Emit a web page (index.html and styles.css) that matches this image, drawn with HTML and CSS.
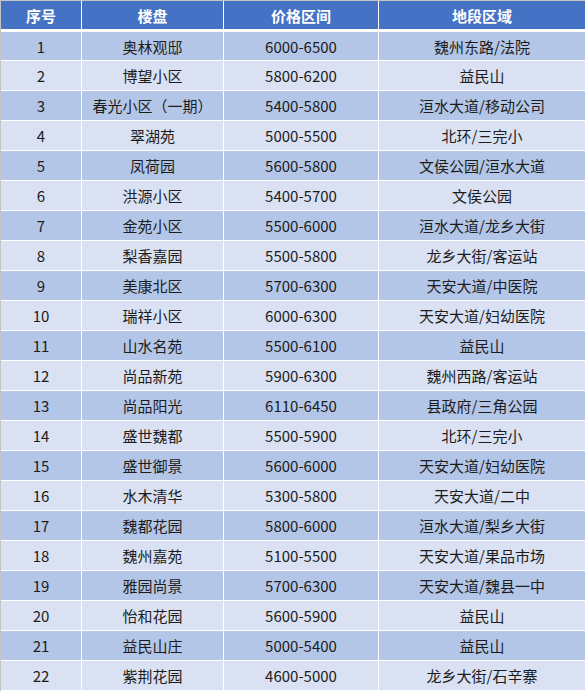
FILE: index.html
```html
<!DOCTYPE html>
<html lang="zh-CN">
<head>
<meta charset="utf-8">
<title>楼盘价格</title>
<link rel="stylesheet" href="styles.css">
</head>
<body>
<div class="sheet">
  <div class="row head"><div>序号</div><div>楼盘</div><div>价格区间</div><div>地段区域</div></div>
  <div class="row odd first"><div>1</div><div>奥林观邸</div><div>6000-6500</div><div>魏州东路/法院</div></div>
  <div class="row even"><div>2</div><div>博望小区</div><div>5800-6200</div><div>益民山</div></div>
  <div class="row odd"><div>3</div><div>春光小区（一期）</div><div>5400-5800</div><div>洹水大道/移动公司</div></div>
  <div class="row even"><div>4</div><div>翠湖苑</div><div>5000-5500</div><div>北环/三完小</div></div>
  <div class="row odd"><div>5</div><div>凤荷园</div><div>5600-5800</div><div>文侯公园/洹水大道</div></div>
  <div class="row even"><div>6</div><div>洪源小区</div><div>5400-5700</div><div>文侯公园</div></div>
  <div class="row odd"><div>7</div><div>金苑小区</div><div>5500-6000</div><div>洹水大道/龙乡大街</div></div>
  <div class="row even"><div>8</div><div>梨香嘉园</div><div>5500-5800</div><div>龙乡大街/客运站</div></div>
  <div class="row odd"><div>9</div><div>美康北区</div><div>5700-6300</div><div>天安大道/中医院</div></div>
  <div class="row even"><div>10</div><div>瑞祥小区</div><div>6000-6300</div><div>天安大道/妇幼医院</div></div>
  <div class="row odd"><div>11</div><div>山水名苑</div><div>5500-6100</div><div>益民山</div></div>
  <div class="row even"><div>12</div><div>尚品新苑</div><div>5900-6300</div><div>魏州西路/客运站</div></div>
  <div class="row odd"><div>13</div><div>尚品阳光</div><div>6110-6450</div><div>县政府/三角公园</div></div>
  <div class="row even"><div>14</div><div>盛世魏都</div><div>5500-5900</div><div>北环/三完小</div></div>
  <div class="row odd"><div>15</div><div>盛世御景</div><div>5600-6000</div><div>天安大道/妇幼医院</div></div>
  <div class="row even"><div>16</div><div>水木清华</div><div>5300-5800</div><div>天安大道/二中</div></div>
  <div class="row odd"><div>17</div><div>魏都花园</div><div>5800-6000</div><div>洹水大道/梨乡大街</div></div>
  <div class="row even"><div>18</div><div>魏州嘉苑</div><div>5100-5500</div><div>天安大道/果品市场</div></div>
  <div class="row odd"><div>19</div><div>雅园尚景</div><div>5700-6300</div><div>天安大道/魏县一中</div></div>
  <div class="row even"><div>20</div><div>怡和花园</div><div>5600-5900</div><div>益民山</div></div>
  <div class="row odd"><div>21</div><div>益民山庄</div><div>5000-5400</div><div>益民山</div></div>
  <div class="row even"><div>22</div><div>紫荆花园</div><div>4600-5000</div><div>龙乡大街/石辛寨</div></div>
</div>
</body>
</html>
```
FILE: styles.css
```css
html, body {
  margin: 0;
  padding: 0;
  background: #ffffff;
}

.sheet {
  width: 584px;
  height: 690px;
  overflow: hidden;
  border-top: 1px solid #c4c4c4;
  border-left: 1px solid #c4c4c4;
  background: #ffffff;
  font-family: "Noto Sans CJK SC", "Noto Sans", sans-serif;
  font-size: 15px;
  color: #1c1c1c;
}

.row {
  display: grid;
  grid-template-columns: 80px 141px 154px 206px;
  column-gap: 1px;
  height: 29px;
  margin-bottom: 1px;
}

.row > div {
  display: flex;
  align-items: center;
  justify-content: center;
  white-space: nowrap;
}

.head {
  height: 28px;
  margin-bottom: 3px;
  color: #ffffff;
  font-weight: bold;
}

.head > div {
  background: #4472c4;
}

.first {
  height: 28px;
}

.odd > div {
  background: #b4c6e7;
}

.even > div {
  background: #d9e1f2;
}
```
